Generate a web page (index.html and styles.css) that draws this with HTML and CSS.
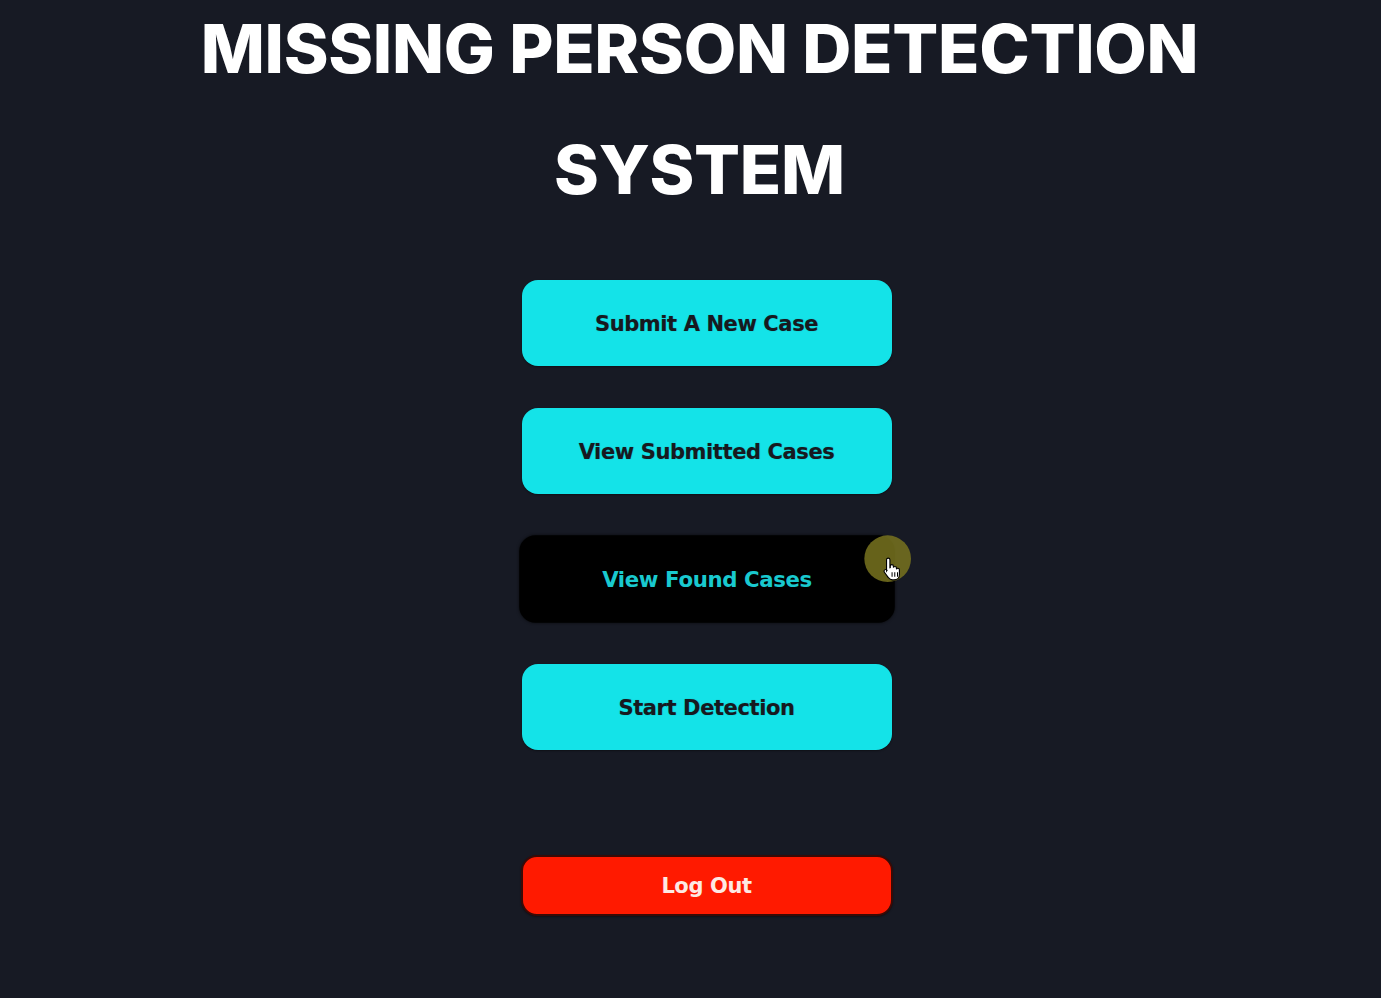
FILE: index.html
```html
<!DOCTYPE html>
<html>
<head>
<meta charset="utf-8">
<title>Missing Person Detection System</title>
<link rel="stylesheet" href="styles.css">
</head>
<body>
<main class="page">
  <h1 class="title">MISSING PERSON DETECTION<br>SYSTEM</h1>
  <nav class="menu">
    <button class="btn">Submit A New Case</button>
    <button class="btn">View Submitted Cases</button>
    <button class="btn btn-hover">View Found Cases
      <span class="cursor">
        <span class="cursor-glow"></span>
        <svg class="hand" width="20" height="26" viewBox="0 0 18 22">
          <path d="M5 1.5c.9 0 1.5.6 1.5 1.5v7l.3-.1V8.6c0-.8.6-1.4 1.4-1.4s1.4.6 1.4 1.4v1.3c.2-.6.7-1 1.3-1 .8 0 1.4.6 1.4 1.4v1c.2-.5.7-.8 1.2-.8.8 0 1.4.6 1.4 1.4V16c0 2.8-2 4.8-4.8 4.8H8.8c-1.6 0-2.8-.8-3.7-2L1.6 14c-.5-.7-.4-1.6.3-2.1.7-.5 1.6-.3 2.1.4L3.5 13V3c0-.9.6-1.5 1.5-1.5z" fill="#fff" stroke="#000" stroke-width="1"/>
          <path d="M8.4 14v4M10.8 14v4M13.2 14v4" stroke="#000" stroke-width="0.9"/>
        </svg>
      </span>
    </button>
    <button class="btn">Start Detection</button>
    <button class="btn btn-logout">Log Out</button>
  </nav>
</main>
</body>
</html>
```

FILE: styles.css
```css
html, body {
  margin: 0;
  padding: 0;
}
body {
  background: #171a24;
  min-height: 998px;
  font-family: "DejaVu Sans", Verdana, sans-serif;
}
.page {
  display: flex;
  flex-direction: column;
  align-items: center;
}
.title {
  margin: 0;
  font-family: "Inter", "Noto Sans", sans-serif;
  font-weight: 800;
  font-size: 68px;
  line-height: 121px;
  letter-spacing: -0.3px;
  color: #ffffff;
  text-align: center;
  position: relative;
  left: 9px;
  top: -12px;
}
.menu {
  display: flex;
  flex-direction: column;
  align-items: center;
  gap: 42px;
  margin-top: 38px;
  margin-left: 32px;
}
.btn {
  box-sizing: border-box;
  width: 370px;
  height: 86px;
  padding-top: 3px;
  border: none;
  border-radius: 16px;
  background: #14e3e8;
  color: #17191f;
  font-family: "DejaVu Sans", Verdana, sans-serif;
  font-weight: bold;
  font-size: 21px;
  letter-spacing: -0.4px;
  text-shadow: 0 0 1px rgba(0,0,0,0.35);
  cursor: pointer;
  position: relative;
  box-shadow: 0 1px 2px rgba(0,0,0,0.4);
}
.btn-hover {
  background: #000000;
  color: #19c9cf;
  transform: scale(1.015);
  box-shadow: 0 0 3px rgba(0,0,0,0.6);
  text-shadow: none;
}
.btn-logout {
  margin-top: 63px;
  width: 372px;
  height: 61px;
  padding-top: 1px;
  background: #ff1a00;
  color: #fde9e4;
  border: 2px solid #3a0a06;
  border-radius: 16px;
  text-shadow: none;
}
.cursor {
  position: absolute;
  left: 340px;
  top: 0px;
  width: 46px;
  height: 46px;
}
.cursor-glow {
  position: absolute;
  inset: 0;
  border-radius: 50%;
  background: rgba(120, 115, 30, 0.85);
}
.hand {
  position: absolute;
  left: 18px;
  top: 20px;
}
```
